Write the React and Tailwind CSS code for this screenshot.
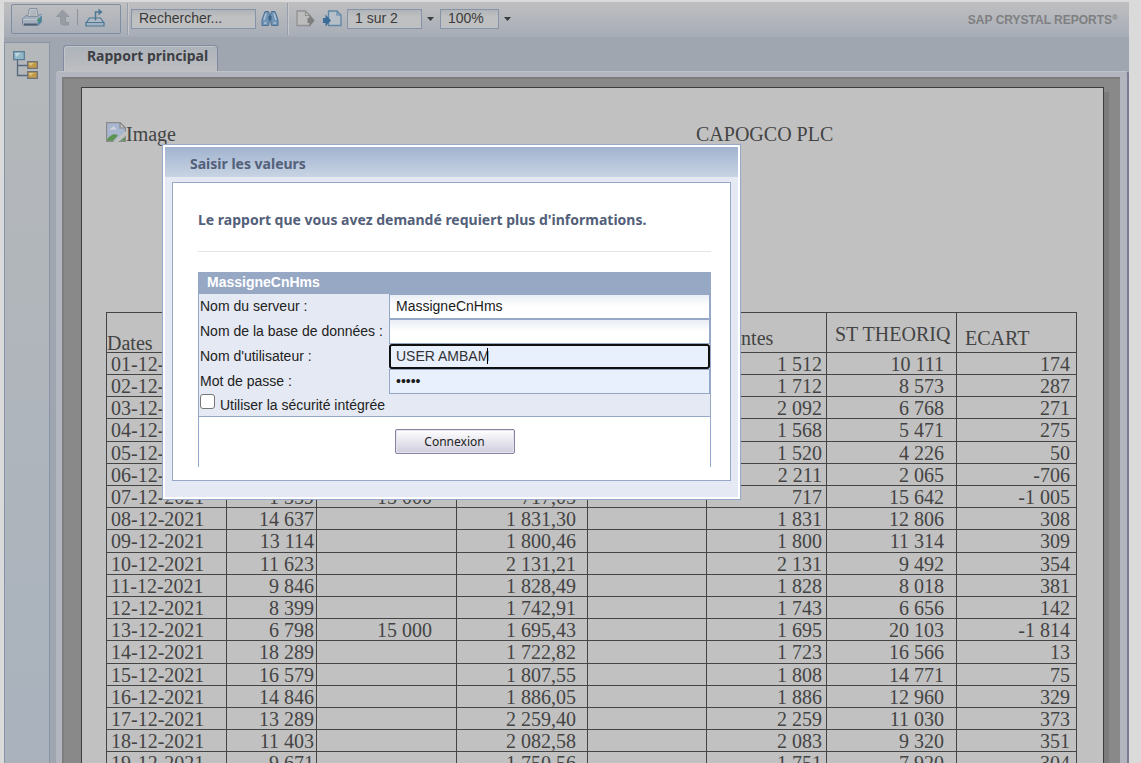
import React from "react";

const COLUMNS = [
  { head: "Dates", width: "w-[120px]", cell: "pl-1 text-left", headCell: "pt-[2px] pl-0 pb-0 leading-[18px]" },
  { head: "", width: "w-[90px]", cell: "pr-[2px] text-right", headCell: "" },
  { head: "", width: "w-[140px]", cell: "pr-6 text-right", headCell: "" },
  { head: "", width: "w-[131px]", cell: "pr-[11px] text-right", headCell: "" },
  { head: "", width: "w-[119px]", cell: "text-right", headCell: "" },
  { head: "Ventes", width: "w-[120px]", cell: "pr-1 text-right", headCell: "pl-[13px] pb-1" },
  { head: "ST THEORIQ", width: "w-[130px]", cell: "pr-3 text-right", headCell: "pl-2 pb-2" },
  { head: "ECART", width: "", cell: "pr-[6px] text-right", headCell: "pl-2 pb-1" },
];

const ROWS = [
  ["01-12-2021", "", "", "", "", "1 512", "10 111", "174"],
  ["02-12-2021", "", "", "", "", "1 712", "8 573", "287"],
  ["03-12-2021", "", "", "", "", "2 092", "6 768", "271"],
  ["04-12-2021", "", "", "", "", "1 568", "5 471", "275"],
  ["05-12-2021", "", "", "", "", "1 520", "4 226", "50"],
  ["06-12-2021", "", "", "", "", "2 211", "2 065", "-706"],
  ["07-12-2021", "1 359", "15 000", "717,05", "", "717", "15 642", "-1 005"],
  ["08-12-2021", "14 637", "", "1 831,30", "", "1 831", "12 806", "308"],
  ["09-12-2021", "13 114", "", "1 800,46", "", "1 800", "11 314", "309"],
  ["10-12-2021", "11 623", "", "2 131,21", "", "2 131", "9 492", "354"],
  ["11-12-2021", "9 846", "", "1 828,49", "", "1 828", "8 018", "381"],
  ["12-12-2021", "8 399", "", "1 742,91", "", "1 743", "6 656", "142"],
  ["13-12-2021", "6 798", "15 000", "1 695,43", "", "1 695", "20 103", "-1 814"],
  ["14-12-2021", "18 289", "", "1 722,82", "", "1 723", "16 566", "13"],
  ["15-12-2021", "16 579", "", "1 807,55", "", "1 808", "14 771", "75"],
  ["16-12-2021", "14 846", "", "1 886,05", "", "1 886", "12 960", "329"],
  ["17-12-2021", "13 289", "", "2 259,40", "", "2 259", "11 030", "373"],
  ["18-12-2021", "11 403", "", "2 082,58", "", "2 083", "9 320", "351"],
  ["19-12-2021", "9 671", "", "1 750,56", "", "1 751", "7 920", "304"],
];

function PrintIcon() {
  return (
    <svg width="22" height="20" viewBox="0 0 22 20">
      <path d="M1.500 12 5 8.500h11.500l4-1v7.500L17 18.500H2.500L1.500 17z" fill="#a3afbd" stroke="#77889c" />
      <path d="M6.500 9.500 8.500 1.500H16l1 8z" fill="#c0c4c9" stroke="#8792a0" />
      <path d="M10 4h5M9.500 6h5.500M9 8h6" stroke="#9aa4b0" strokeWidth=".9" />
      <path d="M2 12.500h14.500l4-4.500" fill="none" stroke="#bcc5cf" />
      <path d="M3 16.500h13.500v1.800H3z" fill="#4d5f74" />
      <path d="M16.500 12.500 20.500 8.500v6.200L17 18.500z" fill="#4f86ac" />
      <circle cx="18" cy="13" r="1.600" fill="#4d9160" />
    </svg>
  );
}

function UpIcon() {
  return (
    <svg width="14" height="17" viewBox="0 0 14 17">
      <path d="M6.500 1 13 7.500H9.500v6h3V16H7.500Q4.500 16 4.500 13V7.500H.5z" fill="#989ca5" stroke="#8c929b" strokeWidth=".8" />
    </svg>
  );
}

function ExportIcon() {
  return (
    <svg width="20" height="19" viewBox="0 0 20 19" fill="none" stroke="#4d7796" strokeWidth="1.200">
      <path d="M4.500 10h11l3 4.500h-17z" fill="#b1bac2" />
      <path d="M1 14.500h18V18H1z" fill="#a2b2c0" />
      <path d="M10.500 12.500V4H15" strokeWidth="1.500" />
      <path d="M13.500.5 17.500 4l-4 3.500z" fill="#4d7796" stroke="none" />
    </svg>
  );
}

function FindIcon() {
  return (
    <svg width="18" height="17" viewBox="0 0 18 17" stroke="#4b7093">
      <path d="M4 1.500h3.500l1 3V10l-1 5.500H1V10z" fill="#6f94b6" />
      <path d="M14 1.500h-3.500l-1 3V10l1 5.500H17V10z" fill="#6f94b6" />
      <path d="M7.500 6h3v4h-3z" fill="#3d6489" stroke="none" />
      <path d="M5 3.500 3 10M13 3.500 15 10M3 13h2.500M12.500 13H15" stroke="#aec2d3" strokeWidth="1.500" />
    </svg>
  );
}

function PreviousPageIcon() {
  return (
    <svg width="19" height="17" viewBox="0 0 19 17">
      <path d="M1 1h8.500L14 5.500V15.500H1z" fill="#bcbcbc" stroke="#919191" strokeWidth="1.300" />
      <path d="M9.500 1v4.500H14" fill="none" stroke="#919191" strokeWidth="1.200" />
      <path d="m18.800 10.500-5.300-6V8H11.500v5h2v3.500z" fill="#7f7f7f" />
    </svg>
  );
}

function NextPageIcon() {
  return (
    <svg width="19" height="17" viewBox="0 0 19 17">
      <path d="M5.500 1H14l4 4v10.500H5.500z" fill="#b4bfc8" stroke="#5f86a5" strokeWidth="1.300" />
      <path d="M14 1v4h4" fill="none" stroke="#5f86a5" strokeWidth="1.200" />
      <path d="m8 10.500-5.500-6V8H0v5h2.500v3.500z" fill="#3b6c98" />
    </svg>
  );
}

function TreeIcon() {
  return (
    <svg width="25" height="28" viewBox="0 0 25 28">
      <path d="M4.500 9v15.500H14M4.500 14.500H14" fill="none" stroke="#53687d" strokeWidth="1.300" />
      <path d="M.7.700h10.600v8H.7z" fill="#8fb7c8" stroke="#5c7d93" strokeWidth="1.300" />
      <path d="M2 2h6L3 6z" fill="#c2d5dc" />
      <path d="M14.700 10.700h9.600v6.600h-9.600z" fill="#c39b48" stroke="#6e7179" strokeWidth="1.300" />
      <path d="M16 12h5l-4 3z" fill="#dbc58d" />
      <path d="M14.700 20.700h9.600v6.600h-9.600z" fill="#c39b48" stroke="#6e7179" strokeWidth="1.300" />
      <path d="M16 22h5l-4 3z" fill="#dbc58d" />
    </svg>
  );
}

function MissingImageIcon() {
  return (
    <svg width="20" height="20" viewBox="0 0 20 20">
      <path d="M.6.600h13.400l5.400 5.400v13.400H.6z" fill="#a9b6cf" stroke="#8a8a8a" strokeWidth="1.200" />
      <path d="M14 .6V6h5.400z" fill="#c4c4c4" stroke="#8a8a8a" strokeWidth="1.200" />
      <path d="M4 7.500q.5-2 2.200-1.700Q7.500 3.500 9 5.500q1.500.3 1.300 2z" fill="#d3d6dc" />
      <path d="M1.200 18.800V17Q7 10 12 13.500L7 18.800z" fill="#5c9350" />
      <path d="M7 20 20 9v4.500L12 20z" fill="#c1c1c1" />
      <path d="M14 18.800 19 15v3.800z" fill="#5c9350" />
    </svg>
  );
}

function Caret({ label }) {
  return (
    <button type="button" aria-label={label} className="flex h-5 w-[18px] items-center justify-center pr-[2px]">
      <svg width="7" height="4" viewBox="0 0 7 4"><path d="M0 0h7L3.500 4z" fill="#3c3c3c" /></svg>
    </button>
  );
}

function Separator() {
  return <div className="h-8 w-[2px] shrink-0 border-r border-[#c6c7cb] bg-[#979eac]" />;
}

const toolField =
  "h-5 border border-[#8793a6] bg-linear-to-b from-[#b0b4b9] to-[#bfc0c1] to-40% px-[7px] pb-[2px] font-['Liberation_Sans',sans-serif] text-sm leading-4 text-[#3a3a3a] outline-none placeholder:text-[#3a3a3a]";

function Toolbar() {
  return (
    <header className="flex h-[35px] shrink-0 items-center border-b border-[#a9aeb6] bg-linear-to-b from-[#bfbfc0] to-[#a7adb7] pr-[11px] pl-[7px]">
      <div className="flex h-[30px] w-[110px] shrink-0 items-center rounded-[2px] border border-[#7f8da2] pb-1 pl-[9px]">
        <button type="button" aria-label="Imprimer"><PrintIcon /></button>
        <button type="button" aria-label="Niveau supérieur" className="ml-[13px]"><UpIcon /></button>
        <div className="mx-[7px] h-4 w-px bg-[#8b919d]" />
        <button type="button" aria-label="Exporter"><ExportIcon /></button>
      </div>
      <div className="ml-[6px] flex"><Separator /></div>
      <input aria-label="Rechercher" placeholder="Rechercher..." className={`${toolField} ml-[2px] w-[125px]`} />
      <button type="button" aria-label="Lancer la recherche" className="ml-[5px] pb-[2px]"><FindIcon /></button>
      <div className="ml-2 flex"><Separator /></div>
      <button type="button" aria-label="Page précédente" className="ml-[7px] pb-[2px]"><PreviousPageIcon /></button>
      <button type="button" aria-label="Page suivante" className="ml-2 pb-[2px]"><NextPageIcon /></button>
      <input aria-label="Page" defaultValue="1 sur 2" className={`${toolField} ml-[5px] w-[75px]`} />
      <Caret label="Choisir la page" />
      <input aria-label="Zoom" defaultValue="100%" className={`${toolField} w-[59px]`} />
      <Caret label="Choisir le zoom" />
      <div className="ml-auto flex pt-[2px] font-['Liberation_Sans',sans-serif] text-xs leading-4 font-bold text-[#7f7f81]">
        SAP CRYSTAL REPORTS<span className="text-[8px] leading-3">®</span>
      </div>
    </header>
  );
}

function ReportTable() {
  return (
    <table className="w-full table-fixed border-collapse">
      <thead>
        <tr className="h-10">
          {COLUMNS.map((c, i) => (
            <th key={i} className={`border border-[#444] align-bottom text-left font-normal ${c.width} ${c.headCell}`}>
              {c.head}
            </th>
          ))}
        </tr>
      </thead>
      <tbody>
        {ROWS.map((row) => (
          <tr key={row[0]} className="h-[22px] nth-[5n+4]:h-[23px]">
            {row.map((value, i) => (
              <td key={i} className={`border border-[#444] py-0 ${COLUMNS[i].cell}`}>{value}</td>
            ))}
          </tr>
        ))}
      </tbody>
    </table>
  );
}

const field =
  "block h-[25px] w-full border border-[#96a8c8] px-[6px] pb-[2px] text-sm text-[#1a1a1a] outline-none";
const plainField = "bg-linear-to-b from-[#e9eef5] to-white to-50%";

function FormRow({ id, label, children }) {
  return (
    <div className="flex items-center">
      <label htmlFor={id} className="w-[190px] shrink-0 pb-[2px] pl-px whitespace-nowrap">{label}</label>
      <div className="relative flex-1">{children}</div>
    </div>
  );
}

function LoginDialog() {
  return (
    <div
      role="dialog"
      aria-labelledby="dialog-title"
      className="absolute top-36 left-[162px] w-[579px] border border-[#96a8c8] bg-white p-[2px] font-['Noto_Sans',sans-serif]"
    >
      <div className="bg-[#e5e9f3]">
        <h2
          id="dialog-title"
          className="flex h-[30px] items-center bg-linear-to-b from-[#a1b3cf] to-[#c8d4e3] pt-1 pl-[25px] text-sm font-bold text-[#536079]"
        >
          Saisir les valeurs
        </h2>
        <div className="px-[7px] pt-[5px] pb-4">
          <form className="border border-[#96a8c8] bg-white pr-[19px] pb-[13px] pl-[25px]" onSubmit={(e) => e.preventDefault()}>
            <p className="border-b border-[#e4e4e4] pt-[27px] pb-[21px] text-sm font-bold text-[#536079]">
              Le rapport que vous avez demandé requiert plus d'informations.
            </p>
            <fieldset className="mt-5 min-w-0 border-x border-[#96a8c8] font-['Liberation_Sans',sans-serif] text-sm text-[#222]">
              <div className="h-[22px] bg-[#97a8c5] pl-2 leading-5 font-bold text-white">MassigneCnHms</div>
              <div className="border-b border-[#96a8c8] bg-[#e5e9f3]">
                <FormRow id="server" label="Nom du serveur :">
                  <input id="server" defaultValue="MassigneCnHms" className={`${field} ${plainField}`} />
                </FormRow>
                <FormRow id="database" label="Nom de la base de données :">
                  <input id="database" className={`${field} ${plainField}`} />
                </FormRow>
                <FormRow id="user" label="Nom d'utilisateur :">
                  <input
                    id="user"
                    defaultValue="USER AMBAM"
                    className="block h-[25px] w-full rounded-[3px] border-2 border-[#101010] bg-[#e8effd] px-[5px] pb-[2px] text-sm text-[#333] outline-none"
                  />
                  <span className="absolute top-1 left-[98px] h-4 w-px bg-black" />
                </FormRow>
                <FormRow id="password" label="Mot de passe :">
                  <input id="password" type="password" defaultValue="ambam" className={`${field} bg-[#e8effd]`} />
                </FormRow>
                <div className="flex h-[22px] items-start pl-px">
                  <input
                    id="integrated"
                    type="checkbox"
                    className="size-[15px] appearance-none rounded-[3px] border border-[#767676] bg-white"
                  />
                  <label htmlFor="integrated" className="pl-[5px] leading-[22px]">Utiliser la sécurité intégrée</label>
                </div>
              </div>
              <div className="flex justify-center pt-3 pb-[13px]">
                <button
                  type="submit"
                  className="h-[25px] w-[120px] rounded-[2px] border border-[#8684a2] bg-linear-to-b from-white to-[#cfcddd] font-['Noto_Sans',sans-serif] text-xs text-[#222] shadow-[inset_0_0_0_1px_#e6e5ee]"
                >
                  Connexion
                </button>
              </div>
            </fieldset>
          </form>
        </div>
      </div>
    </div>
  );
}

export default function App() {
  return (
    <div className="relative h-screen overflow-hidden bg-[#dadada]">
      <div className="mt-[2px] mr-3 ml-1 flex h-full flex-col bg-[#9fa6b0]">
        <Toolbar />
        <div className="flex min-h-0 flex-1 pt-[5px]">
          <nav className="w-[46px] shrink-0 border border-[#8793a6] bg-linear-to-b from-[#b5b8ba] to-[#a9b2bd] pt-2 pl-2">
            <button type="button" aria-label="Arborescence des groupes"><TreeIcon /></button>
          </nav>
          <main className="ml-[6px] flex min-w-0 flex-1 flex-col font-['Noto_Sans',sans-serif]">
            <div className="flex pt-[3px] pl-[7px]">
              <button
                type="button"
                className="h-[26px] w-[155px] rounded-t-[4px] border border-b-0 border-[#8389a3] bg-linear-to-b from-[#adb3bb] to-[#bdbec0] pb-[6px] pl-[14px] text-sm font-bold text-[#3d3f45] shadow-[inset_1px_1px_0_#c3c5c9]"
              >
                Rapport principal
              </button>
            </div>
            <div className="flex min-h-0 flex-1 rounded-t-[3px] border-t border-r-2 border-t-[#bfc1c7] border-r-[#7d7b92] bg-[#b3b5bf] pt-[5px] pr-[7px] pl-[6px]">
              <div className="min-w-0 flex-1 border-t-2 border-l-2 border-[#7d7d7d] bg-[#898989] pt-2 pr-4 pl-[17px]">
                <article className="border border-[#3d3d3d] bg-[#c1c1c1] pt-[34px] pr-[26px] pb-10 pl-[24px] font-['Liberation_Serif',serif] text-xl leading-5 text-[#444] shadow-[5px_5px_0_#7c7c7c]">
                  <div className="flex h-[190px] items-start">
                    <div className="flex w-[590px] shrink-0 items-start">
                      <MissingImageIcon />
                      <span className="pt-[2px]">Image</span>
                    </div>
                    <h1 className="pt-[2px]">CAPOGCO PLC</h1>
                  </div>
                  <ReportTable />
                </article>
              </div>
            </div>
          </main>
        </div>
      </div>
      <LoginDialog />
    </div>
  );
}
